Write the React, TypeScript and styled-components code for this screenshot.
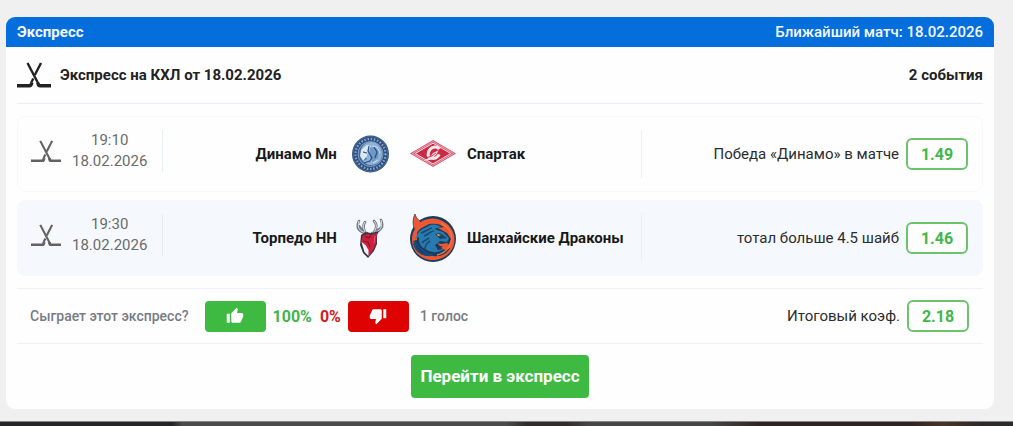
import React from "react";
import styled, { createGlobalStyle } from "styled-components";

const GlobalStyle = createGlobalStyle`
  *, *::before, *::after { box-sizing: border-box; }
  body {
    margin: 0;
    background: #f0f0f0;
    color: #222;
    font-family: Roboto, "Liberation Sans", sans-serif;
    font-size: 15px;
    line-height: 21px;
  }
  h1, h2, p { margin: 0; font: inherit; }
`;

const Page = styled.main`
  padding: 17px 19px 12px 6px;
`;

const Card = styled.section`
  overflow: hidden;
  border-radius: 9px;
  background: #fefefe;
`;

const CardHeader = styled.header`
  display: flex;
  justify-content: space-between;
  align-items: center;
  height: 30px;
  padding: 0 11px;
  background: #056edd;
  color: #f4f9ff;
`;

const HeaderTitle = styled.h1`
  && { font-size: 15px; font-weight: 700; }
`;

const HeaderNote = styled.span`
  font-size: 15px;
  font-weight: 500;
`;

const CardBody = styled.div`
  padding: 0 11px 11px;
`;

const TitleRow = styled.div`
  display: flex;
  align-items: center;
  gap: 9px;
  height: 57px;
  border-bottom: 1px solid #eceef3;
  font-weight: 700;
`;

const Title = styled.h2`
  && { flex: 1; font-size: 15px; font-weight: 700; }
`;

const EventList = styled.div`
  display: grid;
  gap: 8px;
  padding: 12px 0;
`;

const EventRow = styled.article<{ $tinted?: boolean }>`
  display: grid;
  grid-template-columns: 145px minmax(0, 7fr) minmax(0, 5fr);
  align-items: center;
  height: 76px;
  border: 1px solid ${(p) => (p.$tinted ? "#f5f9fe" : "#f8f8f9")};
  border-radius: 8px;
  background: ${(p) => (p.$tinted ? "#f5f9fe" : "#fefefe")};
`;

const When = styled.div`
  display: flex;
  align-items: center;
  gap: 11px;
  height: 42px;
  margin-bottom: 6px;
  padding-left: 13px;
  border-right: 1px solid #e9eef2;
`;

const DateTime = styled.time`
  color: #6b6b6b;
  text-align: center;
  font-size: 15px;
`;

const TimeLine = styled.span`
  display: block;
`;

const Teams = styled.div`
  display: grid;
  grid-template-columns: 1fr auto 1fr;
  align-items: center;
  column-gap: 11px;
  font-weight: 700;
  color: #191919;
`;

const Logos = styled.div`
  display: flex;
  gap: 16px;
`;

const TeamName = styled.span<{ $home?: boolean }>`
  text-align: ${(p) => (p.$home ? "right" : "left")};
  white-space: nowrap;
`;

const TeamLogo = styled.svg`
  display: block;
  width: 46px;
  height: 50px;
`;

const Bet = styled.div<{ $divided?: boolean }>`
  display: flex;
  justify-content: flex-end;
  align-items: center;
  gap: 7px;
  height: 48px;
  padding-right: 14px;
  border-left: ${(p) => (p.$divided ? "1px solid #eceff5" : "0")};
  color: #2c2c2c;
  white-space: nowrap;
`;

const Odds = styled.strong`
  display: flex;
  justify-content: center;
  align-items: center;
  width: 62px;
  height: 32px;
  border: 2px solid #6bc46c;
  border-radius: 6px;
  background: #fefefe;
  color: #43b649;
  font-size: 16px;
  font-weight: 700;
`;

const Summary = styled.div`
  display: flex;
  justify-content: space-between;
  align-items: center;
  height: 56px;
  border: solid #eef1f7;
  border-width: 1px 0;
`;

const Vote = styled.div`
  display: flex;
  align-items: center;
  padding-left: 13px;
  color: #777c84;
  font-size: 14px;
  font-weight: 500;
`;

const VoteButton = styled.button<{ $down?: boolean }>`
  display: grid;
  place-items: center;
  width: 61px;
  height: 31px;
  margin: 0 ${(p) => (p.$down ? 11 : 7)}px 0 ${(p) => (p.$down ? 7 : 16)}px;
  padding: 0;
  border: 0;
  border-radius: 4px;
  background: ${(p) => (p.$down ? "#de0202" : "#3eba43")};
  color: #fff;
  cursor: pointer;
`;

const Percent = styled.span<{ $down?: boolean }>`
  margin-left: ${(p) => (p.$down ? 8 : 0)}px;
  color: ${(p) => (p.$down ? "#cf2020" : "#45b44a")};
  font-size: 16px;
  font-weight: 700;
`;

const Actions = styled.div`
  display: flex;
  justify-content: center;
  padding-top: 11px;
`;

const OpenLink = styled.a`
  padding: 11px 9px;
  border-radius: 4px;
  background: #3eba43;
  color: #fbfffb;
  font-size: 17px;
  font-weight: 700;
  text-decoration: none;
`;

const NextPanel = styled.div`
  height: 5px;
  border-top: 1px solid #858585;
  background: linear-gradient(90deg, #242326 0 17%, #4a4a4a 18% 50%, #302c2b 52% 56%, #464646 58% 70%, #2e2522 75% 90%, #493326 93%, #2c2929 97%);
`;

const Stick = styled.svg`
  display: block;
  flex: none;
`;

function HockeyIcon({ width, color }: { width: number; color: string }) {
  return (
    <Stick width={width} viewBox="0 0 34 26" fill="none" stroke={color} aria-hidden="true">
      <path d="M10.500 1 21.500 22" strokeWidth="2.400" />
      <path d="M24 1 17.800 13M16.300 16.500 14.300 20.500" strokeWidth="2.400" />
      <path d="M0 23.800h12.500q1.600 0 2.400-3.300M34 23.800H23q-1.500 0-2.200-3" strokeWidth="3.400" />
    </Stick>
  );
}

function Thumb({ down }: { down?: boolean }) {
  return (
    <svg width="18" height="18" viewBox="0 0 24 24" fill="currentColor" aria-hidden="true">
      {down ? (
        <path d="M15 3H6c-.83 0-1.54.5-1.84 1.22l-3.02 7.05c-.09.23-.14.47-.14.73v2c0 1.1.9 2 2 2h6.31l-.95 4.57-.03.32c0 .41.17.79.44 1.06L9.83 23l6.59-6.59c.36-.36.58-.86.58-1.41V5c0-1.1-.9-2-2-2zm4 0v12h4V3h-4z" />
      ) : (
        <path d="M1 21h4V9H1v12zm22-11c0-1.1-.9-2-2-2h-6.31l.95-4.57.03-.32c0-.41-.17-.79-.44-1.06L14.17 1 7.59 7.59C7.22 7.95 7 8.45 7 9v10c0 1.1.9 2 2 2h9c.83 0 1.54-.5 1.84-1.22l3.02-7.05c.09-.23.14-.47.14-.73v-2z" />
      )}
    </svg>
  );
}

function DinamoLogo() {
  return (
    <TeamLogo viewBox="0 0 46 50" fill="none" aria-hidden="true">
      <circle cx="22.500" cy="25" r="18.500" fill="#2c4f80" />
      <circle cx="22.500" cy="25" r="17.400" stroke="#5f7fa9" strokeWidth=".6" />
      <circle cx="22.500" cy="25" r="15" stroke="#8fa8c6" strokeWidth="2.200" strokeDasharray="1.500 1.700" />
      <circle cx="22.500" cy="25" r="12.500" fill="#3f6c9f" stroke="#9db6d1" strokeWidth=".7" />
      <path d="M13 22c0-5 5-9 10-9 7 0 11 6 11 12 0 7-5 11-11 11-4 0-7-2-8-4l4-2-4-5z" fill="#8fb2d6" />
      <path d="m13 21 6-5 4 1-3 4-1 6-4 5-3-5z" fill="#dce8f3" />
      <path d="m22 19 5-1 4 4-1 7-5 4-3-3z" fill="#6f9ac5" />
      <path d="m21 17-1 5 4 7-3 4m5-15 3 5-2 6m-12-6 4 1m-3 10 6-2" stroke="#2a5184" strokeWidth="1.200" />
      <path d="m24 17 5 1 3 6m-7 10 5-3" stroke="#c9dcee" />
    </TeamLogo>
  );
}

function SpartakLogo() {
  return (
    <TeamLogo viewBox="0 0 48 50" fill="none" aria-hidden="true">
      <path d="M0 24.500 24 10.500 48 24.500 24 38.500z" fill="#d4516a" />
      <path d="M2.500 24.500 24 12 45.500 24.500 24 37z" stroke="#f3cbd3" strokeWidth=".7" />
      <path d="M5.500 24.500 24 13.700 42.500 24.500 24 35.300z" fill="#cb2a46" stroke="#f8e4e8" />
      <path d="M30.500 20c-2-3-7-3-9.500 0-3 3.500-3 8 1 9.300 3.500 1 7-.5 8.500-3.800" stroke="#f9e9ec" strokeWidth="3.200" />
      <path d="m14 32 7-4 3-4 6-3-3 5-5 5z" fill="#f5dfe3" />
      <path d="m17 29 6-2 4-3" stroke="#cb2a46" />
    </TeamLogo>
  );
}

function TorpedoLogo() {
  return (
    <TeamLogo viewBox="0 0 46 50" fill="none" aria-hidden="true">
      <path d="M19 20C10 19 8 14 11 8M14 17l-3-4m6 6c-2-4-2-7 0-10m7 11c9-1 12-7 9-13m-3 10 4-3m-8 5c3-4 3-8 0-11" stroke="#737985" strokeWidth="2.600" strokeLinecap="round" />
      <path d="M19 20C11 19 9 14 11 8m6 11c-2-4-2-7 0-10m7 11c9-1 11-7 9-13m-7 12c3-4 3-8 0-11" stroke="#dfe2e7" strokeWidth="1" />
      <path d="m13 22 4-3 6 1 8-2-2 4v9l-3 7-6 7-5-5-3-8z" fill="#353848" />
      <path d="m15 22 5-1 3 1 6-2-1 10-3 7-4 6-4-9-4-5z" fill="#cd203b" />
      <path d="m13.500 29 4 3 3 5v6l-4-4z" fill="#f1f1f5" />
      <path d="m17 23 3 2 3-2m-8 5 5 1 2 5" stroke="#85162e" strokeWidth="1.200" />
      <path d="m27 23-1 7" stroke="#e4607a" strokeWidth=".8" />
    </TeamLogo>
  );
}

function DragonsLogo() {
  return (
    <TeamLogo viewBox="0 0 46 50" fill="none" aria-hidden="true">
      <circle cx="23" cy="26" r="23" fill="#193b60" />
      <path d="M5 17C2 11 3 5 5 1c1 5 6 8 10 11l-5 8z" fill="#ec5733" stroke="#45344a" strokeWidth=".8" />
      <path d="M12 8C25 1 41 9 44 22c3 13-7 24-19 25C12 48 2 39 2 27c0-5 1-9 4-12z" fill="#ec5931" />
      <path d="M7 20c3-6 8-6 12-9 7-1 11 0 15 3l-6 1 9 5 4 6-2 5-5 1-3 3 4 2 5-2c-3 6-9 9-17 8C13 43 6 38 5 31l-2-3 4-1z" fill="#183b63" />
      <path d="M8 20c4-5 8-5 12-8 4-1 8 0 11 2l-7 2 9 3 6 6-2 4-7-1-5 4 3 5 6-1c-5 4-12 4-17 1-6-2-9-8-8-13l-4 2z" fill="#287bac" />
      <path d="M5 29c4 7 9 12 18 13-9 2-17-3-19-11zM14 23c4-1 6-5 10-5m-12 12c2-3 5-3 7-5m-4 11c0-4 2-6 5-8m-9-8c4-1 7-4 11-5" stroke="#194a78" strokeWidth="1.700" />
      <path d="m25 21 5-1 7 5-7 1z" fill="#184269" />
      <path d="m27 21 4 1-3 1z" fill="#ffc447" />
      <path d="m27 30 4 1 7-1-2 4-6-1z" fill="#ec5931" />
      <path d="M31 10c6 3 10 8 11 15-1 9-7 15-15 17" stroke="#f17442" strokeWidth="1.500" />
    </TeamLogo>
  );
}

interface MatchEvent {
  time: string;
  home: string;
  away: string;
  homeLogo: React.ReactNode;
  awayLogo: React.ReactNode;
  bet: string;
  odds: string;
}

const events: MatchEvent[] = [
  { time: "19:10", home: "Динамо Мн", away: "Спартак", homeLogo: <DinamoLogo />, awayLogo: <SpartakLogo />, bet: "Победа «Динамо» в матче", odds: "1.49" },
  { time: "19:30", home: "Торпедо НН", away: "Шанхайские Драконы", homeLogo: <TorpedoLogo />, awayLogo: <DragonsLogo />, bet: "тотал больше 4.5 шайб", odds: "1.46" },
];

export default function App() {
  return (
    <>
      <GlobalStyle />
      <Page>
        <Card>
          <CardHeader>
            <HeaderTitle>Экспресс</HeaderTitle>
            <HeaderNote>Ближайший матч: 18.02.2026</HeaderNote>
          </CardHeader>
          <CardBody>
            <TitleRow>
              <HockeyIcon width={34} color="#222" />
              <Title>Экспресс на КХЛ от 18.02.2026</Title>
              <span>2 события</span>
            </TitleRow>
            <EventList>
              {events.map((event, index) => (
                <EventRow key={event.time} $tinted={index % 2 === 1}>
                  <When>
                    <HockeyIcon width={30} color="#626262" />
                    <DateTime>
                      <TimeLine>{event.time}</TimeLine>
                      <TimeLine>18.02.2026</TimeLine>
                    </DateTime>
                  </When>
                  <Teams>
                    <TeamName $home>{event.home}</TeamName>
                    <Logos>
                      {event.homeLogo}
                      {event.awayLogo}
                    </Logos>
                    <TeamName>{event.away}</TeamName>
                  </Teams>
                  <Bet $divided>
                    <span>{event.bet}</span>
                    <Odds>{event.odds}</Odds>
                  </Bet>
                </EventRow>
              ))}
            </EventList>
            <Summary>
              <Vote>
                <span>Сыграет этот экспресс?</span>
                <VoteButton type="button" aria-label="Да"><Thumb /></VoteButton>
                <Percent>100%</Percent>
                <Percent $down>0%</Percent>
                <VoteButton type="button" aria-label="Нет" $down><Thumb down /></VoteButton>
                <span>1 голос</span>
              </Vote>
              <Bet>
                <span>Итоговый коэф.</span>
                <Odds>2.18</Odds>
              </Bet>
            </Summary>
            <Actions>
              <OpenLink href="#express">Перейти в экспресс</OpenLink>
            </Actions>
          </CardBody>
        </Card>
      </Page>
      <NextPanel />
    </>
  );
}
